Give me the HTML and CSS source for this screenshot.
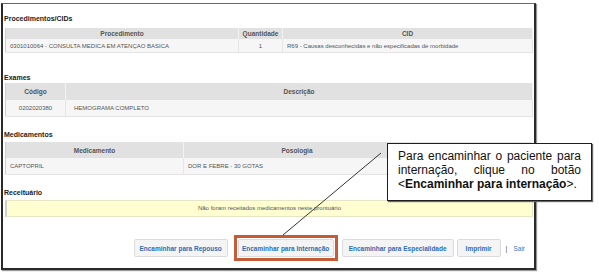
FILE: index.html
```html
<!DOCTYPE html>
<html lang="pt-BR">
<head>
    <meta charset="UTF-8">
    <title>Prontuário - Encaminhamento</title>
    <link rel="stylesheet" href="styles.css">
</head>
<body>
    <div class="frame">
        <div class="section sec-proc">
            <div class="sec-title">Procedimentos/CIDs</div>
            <table class="grid">
                <tr>
                    <th class="col-proc">Procedimento</th>
                    <th class="col-qtd">Quantidade</th>
                    <th>CID</th>
                </tr>
                <tr>
                    <td>0301010064 - CONSULTA MEDICA EM ATENÇAO BASICA</td>
                    <td class="center">1</td>
                    <td>R69 - Causas desconhecidas e não especificadas de morbidade</td>
                </tr>
            </table>
        </div>

        <div class="section sec-exames">
            <div class="sec-title">Exames</div>
            <table class="grid">
                <tr>
                    <th class="col-cod">Código</th>
                    <th>Descrição</th>
                </tr>
                <tr>
                    <td class="center">0202020380</td>
                    <td class="pad">HEMOGRAMA COMPLETO</td>
                </tr>
            </table>
        </div>

        <div class="section sec-meds">
            <div class="sec-title">Medicamentos</div>
            <table class="grid">
                <tr>
                    <th class="col-med">Medicamento</th>
                    <th class="col-pos">Posologia</th>
                    <th></th>
                </tr>
                <tr>
                    <td>CAPTOPRIL</td>
                    <td>DOR E FEBRE - 30 GOTAS</td>
                    <td></td>
                </tr>
            </table>
        </div>

        <div class="section sec-rec">
            <div class="sec-title">Receituário</div>
            <div class="notice">Não foram receitados medicamentos neste prontuário</div>
        </div>

        <div class="actions">
            <button class="btn btn-repouso">Encaminhar para Repouso</button>
            <span class="highlight"><button class="btn btn-intern">Encaminhar para Internação</button></span>
            <button class="btn btn-espec">Encaminhar para Especialidade</button>
            <button class="btn btn-print">Imprimir</button>
            <span class="sep">|</span>
            <a class="exit" href="#">Sair</a>
        </div>
    </div>

    <!-- anotação do manual -->
    <svg class="pointer" width="599" height="275">
        <line x1="381" y1="153" x2="283" y2="235" stroke="#333" stroke-width="1"/>
    </svg>
    <div class="callout">Para encaminhar o paciente para internação, clique no botão &lt;<b>Encaminhar para internação</b>&gt;.</div>
</body>
</html>
```

FILE: styles.css
```css
body {
    margin: 0;
    background: #fff;
    font-family: "Liberation Sans", Arial, sans-serif;
    width: 599px;
    height: 275px;
    overflow: hidden;
    position: relative;
}
.frame {
    box-sizing: border-box;
    width: 535px;
    margin: 3px 0 0 1px;
    padding: 10px 1px 7px 1px;
    border: 2px solid #2a2a2a;
    border-top: 1px solid #6a6a6a;
    box-shadow: 1px 1px 1px #999;
}
.sec-title {
    font-size: 7px;
    font-weight: bold;
    line-height: 10px;
    height: 10px;
    color: #222;
}
.sec-proc .sec-title {
    margin-bottom: 4px;
}
.sec-exames {
    margin-top: 20px;
}
.sec-meds,
.sec-rec {
    margin-top: 13px;
}
.sec-meds .sec-title,
.sec-rec .sec-title {
    margin-bottom: 2px;
}
.grid {
    width: 528px;
    margin-left: 1px;
    border-collapse: collapse;
    table-layout: fixed;
    border-left: 1px solid #cfcfcf;
}
.grid th {
    background: #e1e1e1;
    color: #555;
    font-size: 6.5px;
    font-weight: bold;
    text-align: center;
    padding: 0;
    border-right: 1px solid #f3f3f3;
}
.grid td {
    background: #f6f6f6;
    color: #555;
    font-size: 6px;
    padding: 0 0 0 4px;
    border-right: 1px solid #e6e6e6;
    border-bottom: 1px solid #e4e4e4;
    white-space: nowrap;
    overflow: hidden;
}
.grid td.center {
    text-align: center;
    padding-left: 0;
}
.grid td.pad {
    padding-left: 8px;
}
.sec-proc th { height: 11px; }
.sec-proc td { height: 13px; }
.sec-exames th { height: 17px; }
.sec-exames td { height: 16px; }
.sec-meds th { height: 16px; }
.sec-meds td { height: 16px; }

.col-proc { width: 232px; }
.col-qtd { width: 43px; }
.col-cod { width: 59px; }
.col-med { width: 177px; }
.col-pos { width: 226px; }

.notice {
    box-sizing: border-box;
    width: 528px;
    margin-left: 1px;
    height: 17px;
    line-height: 15px;
    background: #fefed0;
    border: 1px solid #e6e6c6;
    border-left: 2px solid #cfcfcf;
    text-align: center;
    font-size: 6px;
    color: #555;
}
.actions {
    display: flex;
    justify-content: flex-end;
    align-items: center;
    margin-top: 18px;
    padding-right: 8px;
}
.btn {
    box-sizing: border-box;
    height: 18px;
    padding: 0;
    background: #f4f4f4;
    border: 1px solid #dcdcdc;
    border-radius: 2px;
    font-family: "Liberation Sans", Arial, sans-serif;
    font-size: 6.5px;
    font-weight: bold;
    color: #2f6db5;
    white-space: nowrap;
}
.btn-repouso {
    width: 94px;
    margin-right: 6px;
}
.highlight {
    display: flex;
    border: 3px solid #c65b38;
    padding: 1px;
    margin-right: 4px;
}
.btn-intern {
    width: 96px;
}
.btn-espec {
    width: 112px;
    margin-right: 3px;
}
.btn-print {
    width: 44px;
}
.sep {
    font-size: 7px;
    color: #555;
    margin: 0 6px 0 5px;
}
.exit {
    font-size: 6.5px;
    color: #3a78c0;
    text-decoration: none;
}
.pointer {
    position: absolute;
    left: 0;
    top: 0;
    pointer-events: none;
}
.callout {
    position: absolute;
    left: 387px;
    top: 143px;
    box-sizing: border-box;
    width: 205px;
    height: 58px;
    padding: 5px 10px 0 10px;
    background: #fff;
    border: 1px solid #1e1e1e;
    box-shadow: 1px 1px 1px #666;
    font-size: 12px;
    line-height: 14px;
    text-align: justify;
    color: #111;
}
```
